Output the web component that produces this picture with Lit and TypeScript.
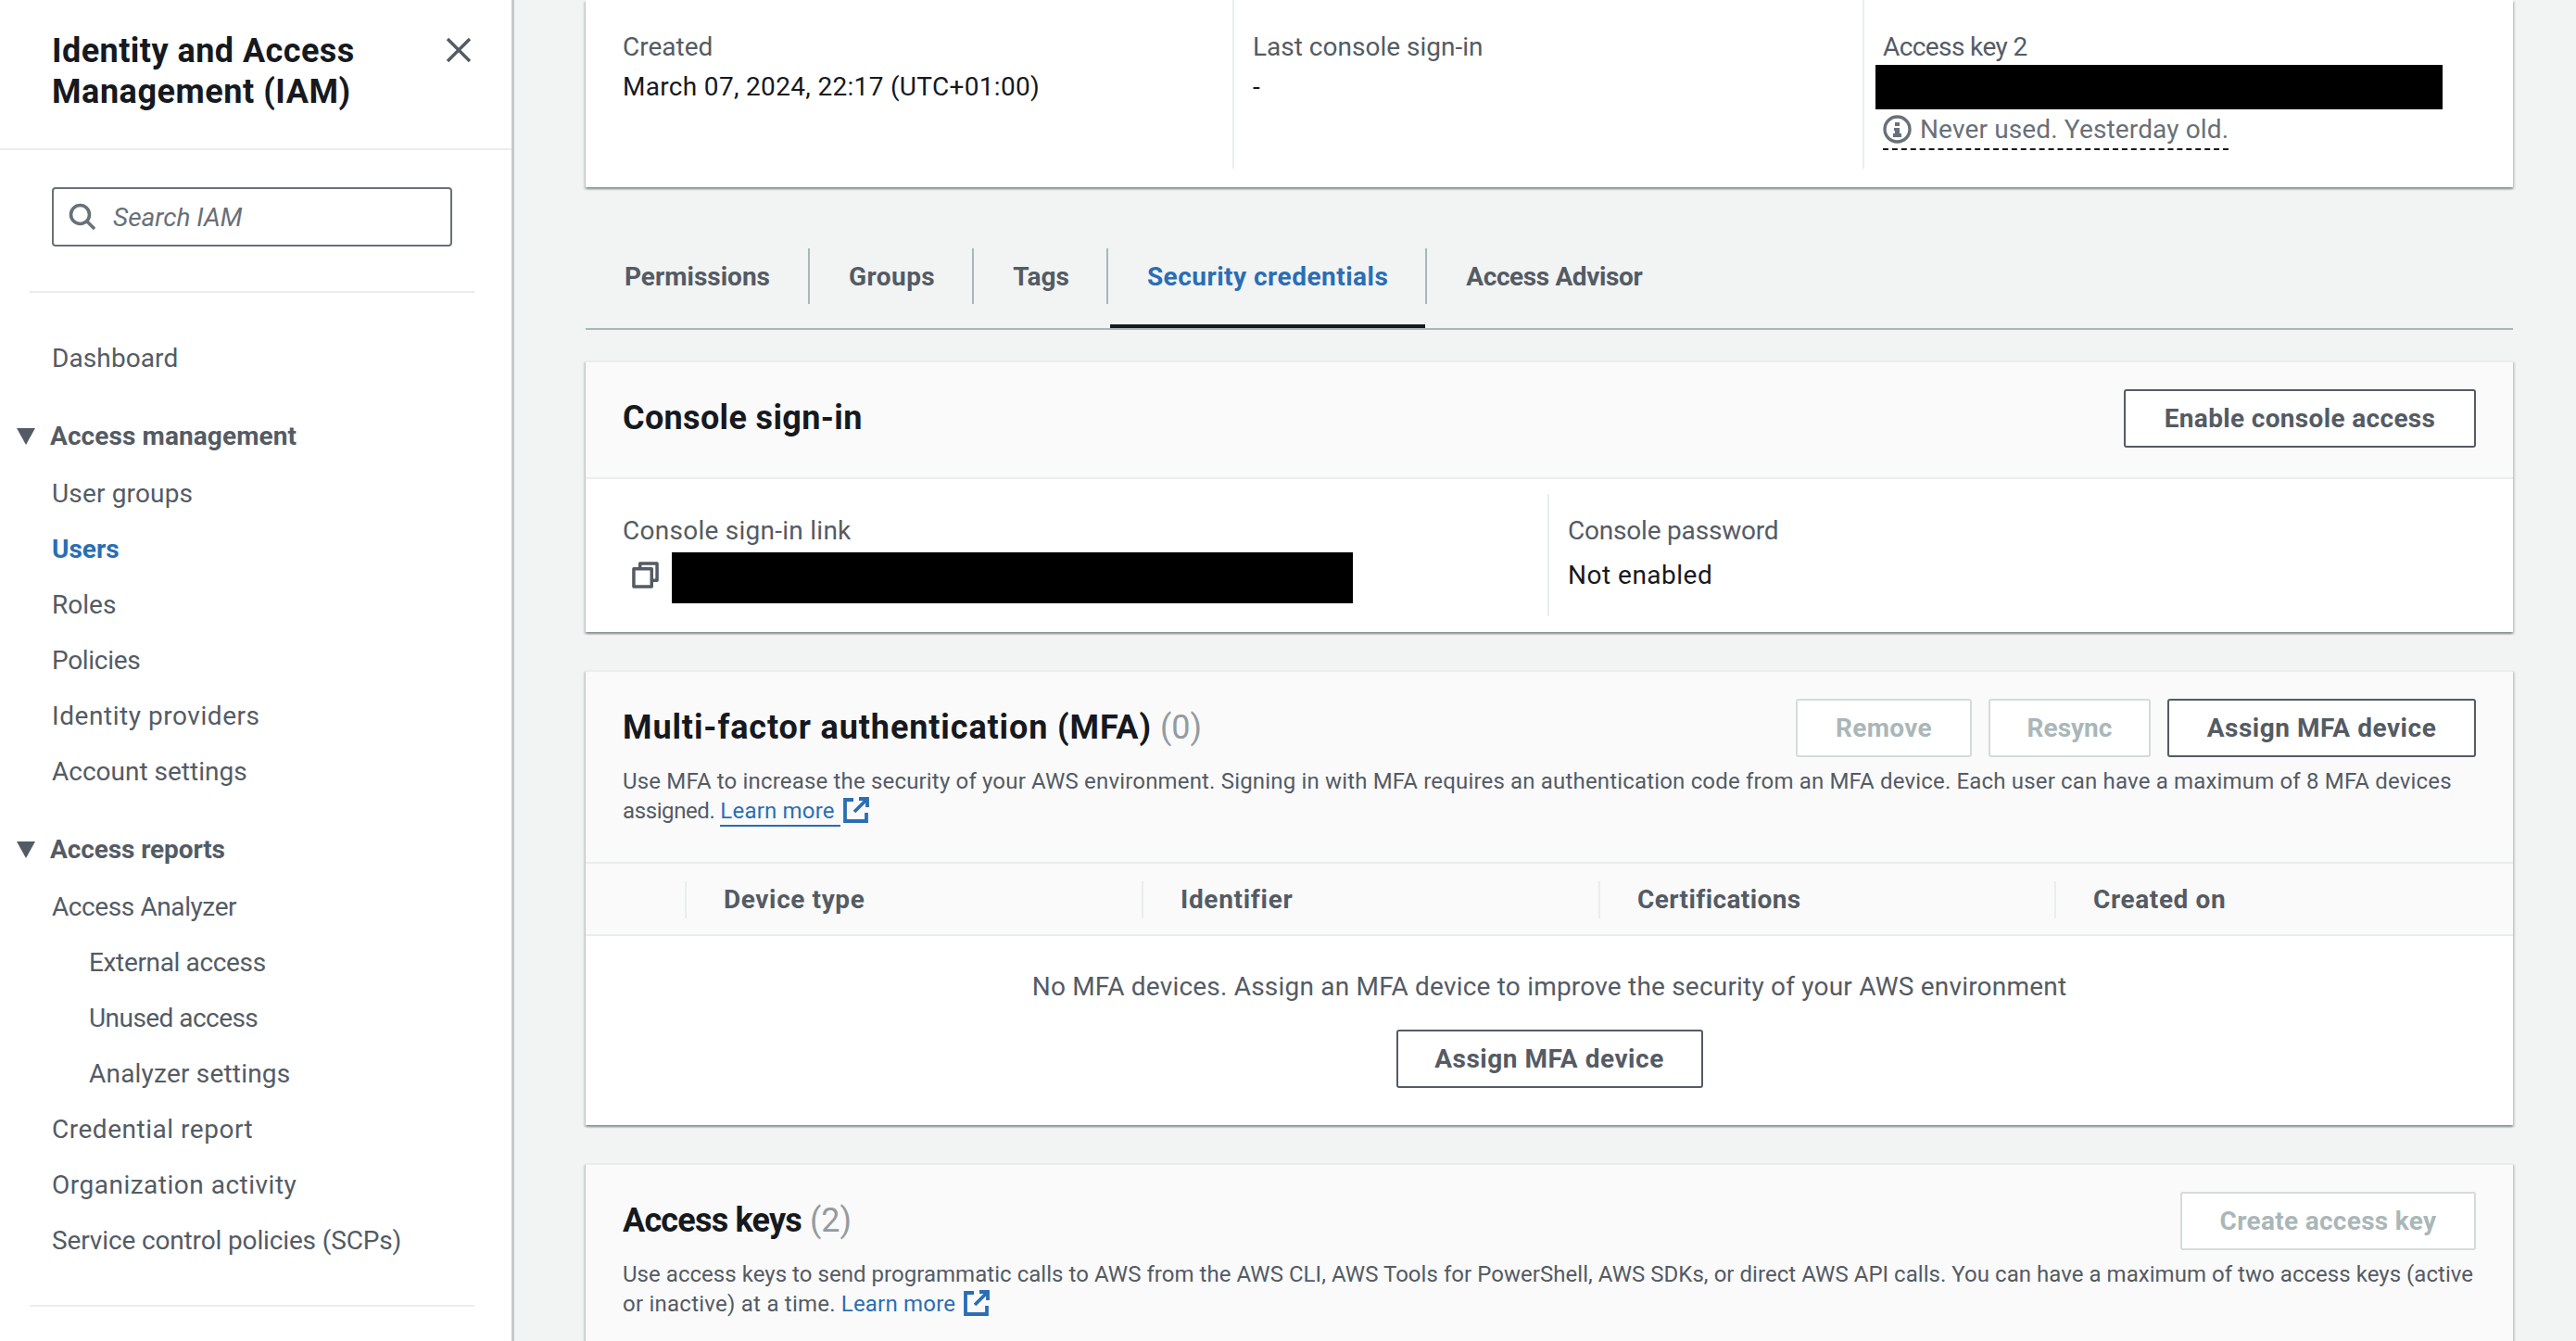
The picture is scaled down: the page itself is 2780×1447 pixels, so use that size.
import { LitElement, html, css } from "lit";
import { customElement } from "lit/decorators.js";

const extIcon = html`<svg class="ext" viewBox="0 0 28 28" fill="none" stroke="currentColor" stroke-width="3.8"><path d="M11 3H2v23h23v-9"/><path d="M17 2h9v9"/><path d="M26 2L12 16"/></svg>`;

// Tracking per label, fitted so each Roboto run has the measured width of the original typeface.
const t = (text: string, ls = 0) => html`<span style="letter-spacing:${ls}px">${text}</span>`;

const NAV_TOP = [
  ["User groups", 0.16],
  ["Users", 0],
  ["Roles", 0],
  ["Policies", -0.3],
  ["Identity providers", 0.55],
  ["Account settings", 0],
] as const;
const NAV_REPORTS = [
  ["Access Analyzer", -0.41, false],
  ["External access", -0.35, true],
  ["Unused access", -0.55, true],
  ["Analyzer settings", 0.2, true],
  ["Credential report", 0.52, false],
  ["Organization activity", 0.5, false],
  ["Service control policies (SCPs)", -0.14, false],
] as const;
const TABS = [
  ["Permissions", 0, "first"],
  ["Groups", 0.45, ""],
  ["Tags", 0, ""],
  ["Security credentials", 0.48, "on"],
  ["Access Advisor", -0.38, "last"],
] as const;
const COLS = [
  ["Device type", 0.6],
  ["Identifier", 0.7],
  ["Certifications", 0.4],
  ["Created on", 0.6],
] as const;

@customElement("app-root")
export class AppRoot extends LitElement {
  static styles = css`
    :host { display: block; width: 2780px; height: 1447px; overflow: hidden; background: #f2f3f3;
      font-family: Roboto, "Noto Sans", sans-serif; font-size: 28px; color: #545b64; }
    * { box-sizing: border-box; }
    .page { display: flex; height: 1447px; overflow: hidden; }

    .side { flex: 0 0 555px; height: 1447px; background: #fff; border-right: 3px solid #c4cbcc; overflow: hidden; }
    .side-head { display: flex; justify-content: space-between; align-items: flex-start; padding: 33px 43px 39px 56px; border-bottom: 2px solid #eaeded; }
    .side-head h1 { margin: 0; font-size: 36px; line-height: 44px; font-weight: 700; color: #16191f; letter-spacing: .45px; }
    .close { width: 28px; height: 28px; margin-top: 7px; color: #545b64; }
    .search { margin: 40px 0 0 56px; width: 432px; height: 64px; border: 2px solid #687078; border-radius: 4px; display: flex; align-items: center; padding-left: 16px; gap: 18px; font-style: italic; color: #687078; }
    .search svg { width: 30px; height: 30px; }
    .rule { height: 2px; background: #eaeded; margin-left: 32px; width: 480px; }
    .rule.a { margin-top: 48px; }
    .rule.b { margin-top: 39px; }
    nav { padding-top: 41px; }
    .item { height: 60px; line-height: 60px; padding-left: 56px; white-space: nowrap; }
    .item.sub { padding-left: 96px; }
    .item.active { color: #2a6eb4; font-weight: 700; }
    .group { height: 60px; line-height: 58px; margin: 24px 0 2px; display: flex; align-items: center; font-weight: 700; padding-left: 18px; gap: 16px; }
    .group svg { width: 20px; height: 18px; }

    .main { flex: 1; padding: 0 68px 0 77px; min-width: 0; }
    .card { background: #fff; box-shadow: 0 2px 2px 0 rgba(0,28,36,.3), 2px 2px 2px 0 rgba(0,28,36,.12), -2px 2px 2px 0 rgba(0,28,36,.12); }
    .card.top { border-top: 2px solid #eaeded; }
    .summary { height: 202px; padding-left: 20px; display: grid; grid-template-columns: 678px 680px 1fr; align-items: start; }
    .cell { height: 182px; padding: 31px 0 0 20px; }
    .cell + .cell { border-left: 2px solid #eaeded; }
    .label { line-height: 39px; color: #545b64; white-space: nowrap; }
    .value { line-height: 48px; color: #16191f; white-space: nowrap; }
    .redact { background: #000; }
    .redact.key { width: 612px; height: 48px; margin-left: -8px; }
    .note { display: inline-flex; align-items: center; gap: 9px; height: 44px; border-bottom: 2px dashed #16191f; color: #687078; white-space: nowrap; }
    .note svg { width: 31px; height: 31px; }

    .tabs { display: flex; margin-top: 66px; padding-bottom: 26px; border-bottom: 2px solid #aab7b8; }
    .tab { position: relative; height: 60px; line-height: 61px; padding: 0 40px 0 42px; font-weight: 700; border-right: 2px solid #aab7b8; white-space: nowrap; }
    .tab.first { padding-left: 42px; padding-right: 41px; }
    .tab.last { border-right: 0; }
    .tab.on { color: #2a6eb4; }
    .tab.on::after { content: ""; position: absolute; left: 2px; right: 0; bottom: -26px; height: 4px; background: #16191f; }

    .head { background: #fafafa; padding: 29px 40px 0; display: flex; justify-content: space-between; align-items: center; }
    .console-head { padding-bottom: 32px; border-bottom: 2px solid #eaeded; }
    h2 { margin: -2px 0 0; font-size: 36px; line-height: 44px; font-weight: 700; color: #16191f; white-space: nowrap; }
    h2 .count { font-weight: 400; color: #949ba0; }
    .btn { display: inline-flex; align-items: center; justify-content: center; height: 63px; border: 2px solid #545b64; border-radius: 3px; background: #fff; font-weight: 700; color: #545b64; white-space: nowrap; }
    .btn.off { border-color: #d5dbdb; color: #aab7b8; }
    .btns { display: flex; gap: 18px; }
    .w-enable { width: 380px; }
    .w-remove { width: 190px; }
    .w-resync { width: 175px; }
    .w-assign { width: 333px; }
    .w-create { width: 319px; }
    .w-assign2 { width: 331px; }

    .console-body { display: grid; grid-template-columns: 1038px 1fr; padding: 16px 0 17px; }
    .cb { height: 132px; padding: 20px 0 0 40px; }
    .cb .label { line-height: 40px; }
    .cb + .cb { border-left: 2px solid #eaeded; padding-left: 20px; }
    .linkrow { display: flex; align-items: flex-start; margin-top: 3px; padding-left: 10px; gap: 14px; }
    .linkrow svg { width: 29px; height: 29px; margin-top: 10px; }
    .redact.link { width: 735px; height: 55px; }
    .value.ne { line-height: 55px; }

    .mt { margin-top: 41px; }
    .desc-wrap { background: #fafafa; padding: 10px 40px 39px; border-bottom: 2px solid #eaeded; }
    .desc { font-size: 24px; line-height: 32px; color: #545b64; }
    a { color: #2a6eb4; text-decoration: none; letter-spacing: .2px; }
    a.ul { border-bottom: 2px solid #2a6eb4; padding-bottom: 1px; }
    .ext { width: 28px; height: 28px; color: #2a6eb4; vertical-align: -5px; margin-left: 3px; }
    .thead { display: grid; grid-template-columns: 107px 493px 493px 492px 1fr; background: #fafafa; height: 78px; padding: 19px 0; border-bottom: 2px solid #eaeded; align-items: stretch; }
    .th { font-weight: 700; line-height: 40px; padding-left: 40px; border-left: 2px solid #eaeded; }
    .th.blank { border-left: 0; }
    .empty { text-align: center; padding: 35px 0 40px; }
    .empty .msg { line-height: 40px; margin-bottom: 26px; }
    .keys { height: 400px; }
    .keys .desc-wrap { border-bottom: 0; }
  `;

  render() {
    const tri = html`<svg viewBox="0 0 20 18"><path d="M0 0h20L10 18z" fill="currentColor"/></svg>`;
    return html`<div class="page">
      <aside class="side">
        <div class="side-head">
          <h1>Identity and Access<br />${t("Management (IAM)", 0.55)}</h1>
          <svg class="close" viewBox="0 0 28 28" fill="none" stroke="currentColor" stroke-width="3.4"><path d="M2 2l24 24M26 2L2 26"/></svg>
        </div>
        <div class="search">
          <svg viewBox="0 0 30 30" fill="none" stroke="currentColor" stroke-width="3.6"><circle cx="12.5" cy="12.5" r="10"/><path d="M20 20l8 8"/></svg>
          <span>Search IAM</span>
        </div>
        <div class="rule a"></div>
        <nav>
          <div class="item">${t("Dashboard", 0.1)}</div>
          <div class="group">${tri}${t("Access management", 0.1)}</div>
          ${NAV_TOP.map(([n, ls]) => html`<div class="item ${n === "Users" ? "active" : ""}">${t(n, ls)}</div>`)}
          <div class="group">${tri}${t("Access reports", -0.1)}</div>
          ${NAV_REPORTS.map(([n, ls, sub]) => html`<div class="item ${sub ? "sub" : ""}">${t(n, ls)}</div>`)}
        </nav>
        <div class="rule b"></div>
      </aside>

      <main class="main">
        <section class="card summary">
          <div class="cell"><div class="label">Created</div><div class="value">${t("March 07, 2024, 22:17 (UTC+01:00)", 0.32)}</div></div>
          <div class="cell"><div class="label">Last console sign-in</div><div class="value">-</div></div>
          <div class="cell">
            <div class="label">${t("Access key 2", -0.6)}</div>
            <div class="redact key"></div>
            <div class="note">
              <svg viewBox="0 0 31 31" fill="none" stroke="currentColor"><circle cx="15.5" cy="15.5" r="13.5" stroke-width="3.4"/><path d="M13 8h5v4h-5zM12 14h6v6h2v4h-9v-4h2v-3h-1z" fill="currentColor" stroke="none"/></svg>
              ${t("Never used. Yesterday old.", 0.14)}
            </div>
          </div>
        </section>

        <div class="tabs">
          ${TABS.map(([n, ls, c]) => html`<div class="tab ${c}">${t(n, ls)}</div>`)}
        </div>

        <section class="card top" style="margin-top:33px">
          <div class="head console-head">
            <h2>${t("Console sign-in", 0.35)}</h2>
            <div class="btn w-enable">${t("Enable console access", 0.34)}</div>
          </div>
          <div class="console-body">
            <div class="cb">
              <div class="label">${t("Console sign-in link", 0.26)}</div>
              <div class="linkrow">
                <svg viewBox="0 0 30 30" fill="none" stroke="#545b64" stroke-width="3.6" stroke-linejoin="round"><path d="M9 7V2h19v19h-6"/><rect x="2" y="8" width="20" height="20"/></svg>
                <div class="redact link"></div>
              </div>
            </div>
            <div class="cb">
              <div class="label">${t("Console password", -0.2)}</div>
              <div class="value ne">${t("Not enabled", 0.5)}</div>
            </div>
          </div>
        </section>

        <section class="card top mt">
          <div class="head">
            <h2>${t("Multi-factor authentication (MFA)", 0.88)} <span class="count">(0)</span></h2>
            <div class="btns">
              <div class="btn off w-remove">${t("Remove", 0.3)}</div>
              <div class="btn off w-resync">Resync</div>
              <div class="btn w-assign">${t("Assign MFA device", 0.52)}</div>
            </div>
          </div>
          <div class="desc-wrap">
            <div class="desc">${t("Use MFA to increase the security of your AWS environment. Signing in with MFA requires an authentication code from an MFA device. Each user can have a maximum of 8 MFA devices", 0.17)} ${t("assigned.", -0.4)} <a class="ul" href="#">Learn more </a>${extIcon}</div>
          </div>
          <div class="thead">
            <div class="th blank"></div>
            ${COLS.map(([n, ls]) => html`<div class="th">${t(n, ls)}</div>`)}
          </div>
          <div class="empty">
            <div class="msg">${t("No MFA devices. Assign an MFA device to improve the security of your AWS environment", 0.2)}</div>
            <div class="btn w-assign2">${t("Assign MFA device", 0.52)}</div>
          </div>
        </section>

        <section class="card top keys" style="margin-top:41px">
          <div class="head">
            <h2>${t("Access keys", -0.8)} <span class="count">(2)</span></h2>
            <div class="btn off w-create">${t("Create access key", 0.3)}</div>
          </div>
          <div class="desc-wrap">
            <div class="desc">${t("Use access keys to send programmatic calls to AWS from the AWS CLI, AWS Tools for PowerShell, AWS SDKs, or direct AWS API calls. You can have a maximum of two access keys (active", 0.04)} ${t("or inactive) at a time.", 0.24)} <a href="#">Learn more </a>${extIcon}</div>
          </div>
        </section>
      </main>
    </div>`;
  }
}
